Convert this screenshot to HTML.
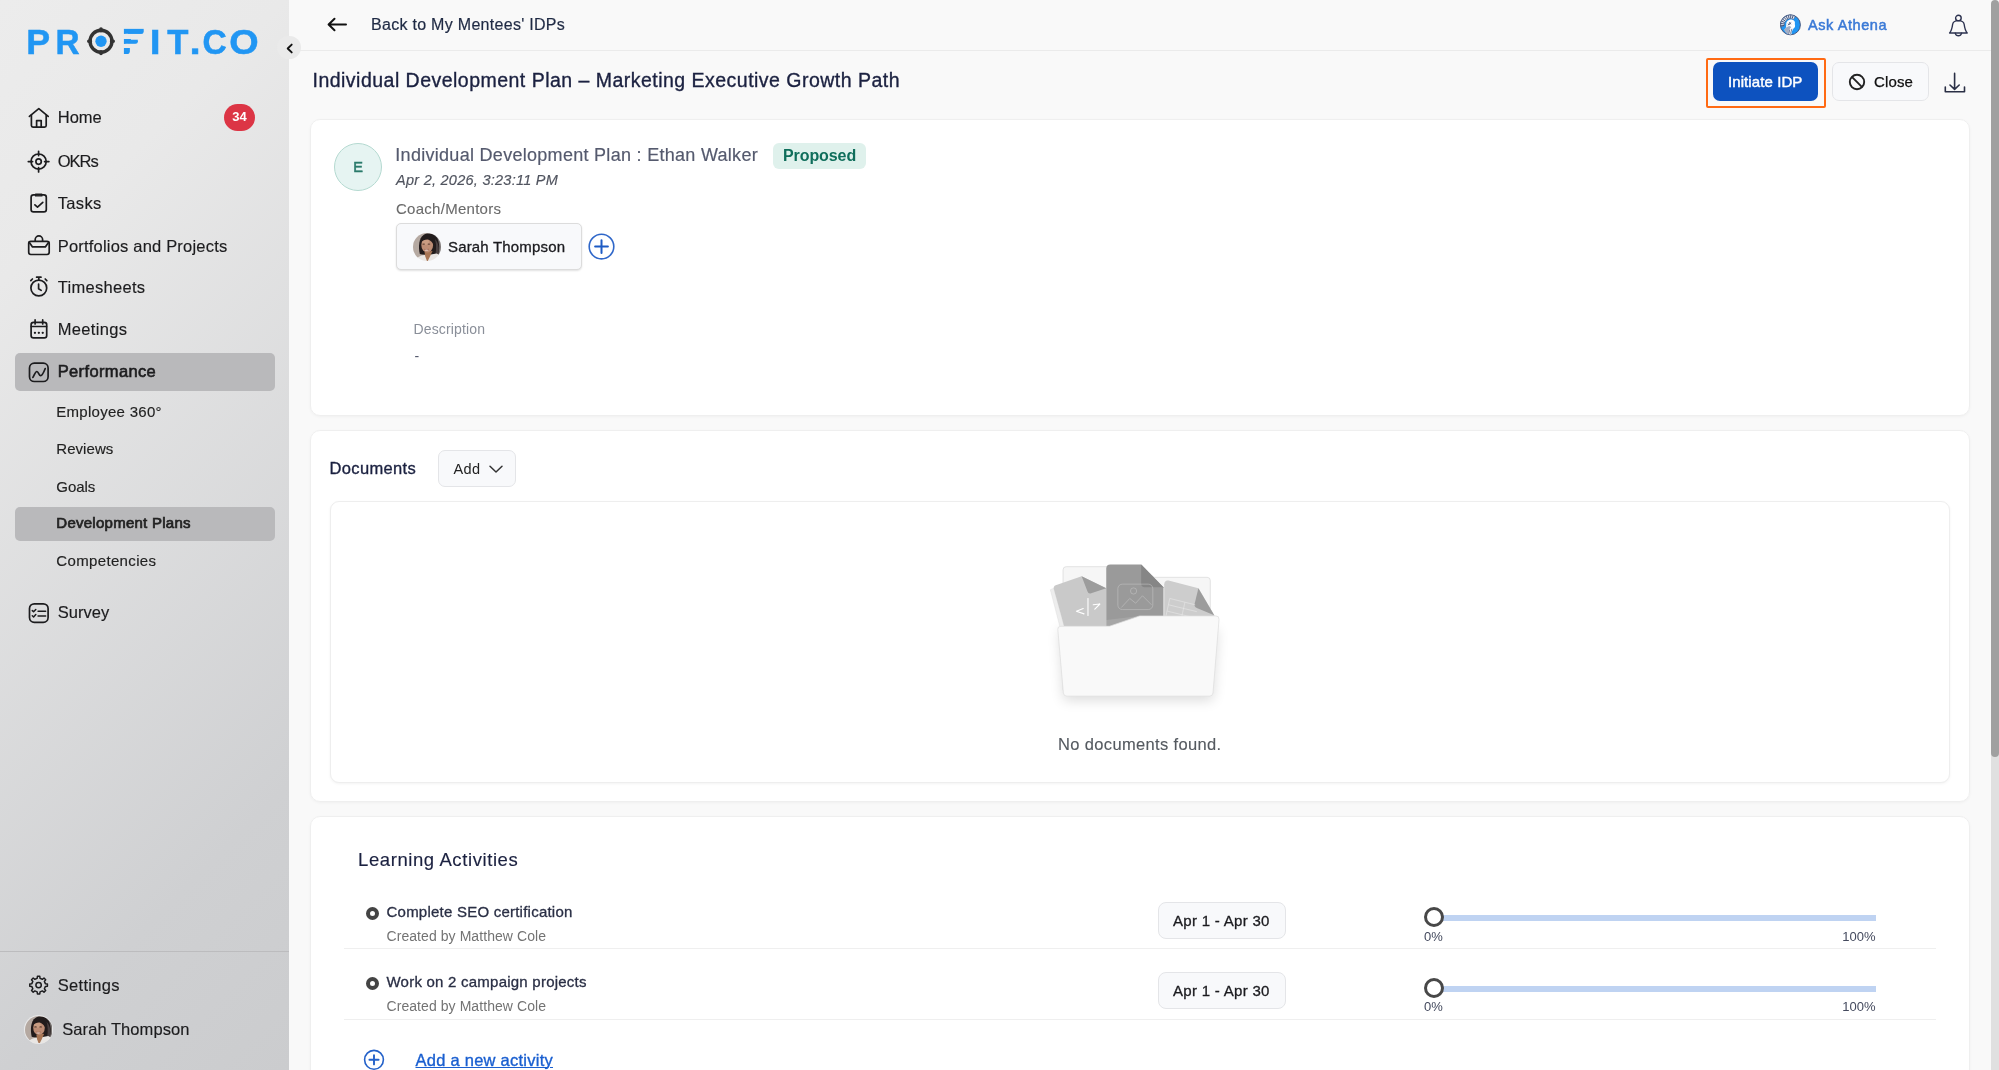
<!DOCTYPE html>
<html lang="en">
<head>
<meta charset="utf-8">
<title>Individual Development Plan</title>
<style>
*{box-sizing:border-box;margin:0;padding:0}
html,body{width:1999px;height:1070px;overflow:hidden;background:#f9f9f9;font-family:"Liberation Sans",Arial,sans-serif;color:#1b1b1f}
.abs{position:absolute}
.t{position:absolute;white-space:nowrap;line-height:1}
#sidebar{position:absolute;left:0;top:0;width:289px;height:1070px;background:linear-gradient(135deg,#ececec 0%,#e9e9e9 21%,#cfd0d2 79%,#cbccce 100%)}
.nav{-webkit-text-stroke:.15px;position:absolute;left:57.7px;font-size:16.5px;color:#1c1c1e;white-space:nowrap;line-height:1;letter-spacing:.1px}
.sub{-webkit-text-stroke:.15px;position:absolute;left:56.3px;font-size:15px;color:#222;white-space:nowrap;line-height:1;letter-spacing:.2px}
.ico{position:absolute;left:27px;width:24px;height:24px}
.ico svg{width:24px;height:24px;display:block}
.hl{position:absolute;left:14.5px;width:260px;background:#b9b9bb;border-radius:5px}
#main{position:absolute;left:289px;top:0;width:1702px;height:1070px;background:#f9f9f9}
.card{position:absolute;background:#fff;border:1px solid #efefef;border-radius:10px;box-shadow:0 1px 3px rgba(0,0,0,.04)}

.bul{width:13px;height:13px;border-radius:50%;border:4px solid #444;background:#fff}
.act{font-size:14.5px;color:#2a2f45}
.cre{font-size:13.5px;color:#737373}
.pill{width:127.500px;height:37px;border-radius:8px;background:#f8f9fb;border:1px solid #e4e5e8}
.pilltx{font-size:15px;color:#1b1b1f}
.track{width:436px;height:6px;background:#bfd3f2}
.knob{width:20px;height:20px;border-radius:50%;background:#fff;border:3px solid #484848}
.pct{font-size:13px;color:#444a5e}
.sep{left:344px;width:1592px;height:1px;background:#efefef}
</style>
</head>
<body>
<svg width="0" height="0" style="position:absolute"><defs>
<clipPath id="avc"><circle cx="14" cy="14" r="14"/></clipPath>
<filter id="avb" x="0" y="0" width="100%" height="100%"><feGaussianBlur stdDeviation="0.75"/></filter>
<symbol id="avatar" viewBox="0 0 28 28"><g clip-path="url(#avc)"><g filter="url(#avb)">
<rect x="-6" y="-6" width="40" height="40" fill="#b5a9a1"/>
<rect x="20" y="-6" width="14" height="40" fill="#7a7573"/>
<path d="M6.800 21C5.200 14 5.800 5 10.500 2C15 -0.800 22.500 0.500 25 7C26.800 12.500 26.500 18.500 24.800 21.500L17 22L9 21.500Z" fill="#231b1b"/>
<path d="M22 6C25 9 26.500 14 25.500 21L22.500 21C23.500 15 23 10 22 6Z" fill="#4a4040"/>
<path d="M2 32C2.500 25.500 5.500 23 10 22.200L18 21.400L23.500 20.400C27 21.500 29 25 29.500 32Z" fill="#e9e6e3"/>
<path d="M11.500 19L12.300 23.500L14.300 29L17 23.500L19.500 18Z" fill="#a87655"/>
<ellipse cx="14.200" cy="12" rx="5.900" ry="7.400" fill="#bd8d74"/>
<ellipse cx="12.500" cy="9" rx="3.500" ry="3" fill="#c99c82"/>
<path d="M8 9.500C8.500 5.500 11.500 3.600 14.500 4C18.500 4.400 20.800 7.500 20.800 12C19.500 10 18 7.500 15 6.600C12.500 6.200 9.800 7.500 8 9.500Z" fill="#231b1b"/>
<ellipse cx="10.700" cy="11.100" rx="1.400" ry=".6" fill="#5d3f33"/><ellipse cx="15.900" cy="11.100" rx="1.400" ry=".6" fill="#5d3f33"/>
<ellipse cx="13.400" cy="17.100" rx="1.900" ry=".75" fill="#ecd9d2"/>
<path d="M11 16.300Q13.400 17 16 16.200" stroke="#8a5242" stroke-width=".5" fill="none"/>
</g></g></symbol></defs></svg>
<div id="sidebar" style="will-change:transform">
  <!-- logo -->
  <svg class="abs" style="left:20px;top:15px" width="250" height="55" viewBox="0 0 250 55" aria-label="PROFIT.CO">
<defs><clipPath id="fclip"><path d="M103.900 13.400H123.700V16.700Q123.700 18.800 121.200 18.800H103.900Z"/><path d="M103.900 23.900H117.800V26.600Q117.800 28.800 115.300 28.800H103.900Z"/><path d="M103.900 33.100H109.800V36.500Q109.800 38.900 107.300 38.900H103.900Z"/></clipPath></defs>
<g font-family="Liberation Sans, Arial, sans-serif" font-weight="700" font-size="34.5" fill="#2196f3" stroke="#2196f3" stroke-width="0.5">
<text transform="translate(6.36 38.5) scale(1.038 1.031)">P</text>
<text transform="translate(35.53 38.5) scale(0.966 1.031)">R</text>
<text transform="translate(129.76 38.5) scale(1.13 1.031)">I</text>
<text transform="translate(147.2 38.5) scale(1.005 1.031)">T</text>
<text transform="translate(169.62 38.5) scale(1.17 1.031)">.</text>
<text transform="translate(182.49 38.5) scale(0.971 1.031)">C</text>
<text transform="translate(209.18 38.5) scale(1.096 1.031)">O</text>
<g clip-path="url(#fclip)"><text transform="translate(101.55 38.5) scale(1.091 1.031)" stroke-width="2.6">F</text></g>
</g>
<circle cx="81" cy="26.25" r="10.950" fill="none" stroke="#333" stroke-width="3.400"/>
<path d="M81 14.050V15.650M81 36.850V38.450M68.800 26.250H70.400M91.600 26.250H93.200" stroke="#333" stroke-width="3.600" stroke-linecap="round"/>
<circle cx="81" cy="26.25" r="5.650" fill="#2196f3"/>
</svg>

  <div class="ico" style="top:106px" id="i-home"><svg viewBox="0 0 24 24"><g fill="none" stroke="#1c1c1e" stroke-width="1.7" stroke-linecap="round" stroke-linejoin="round"><path d="M2.4 10.4L11.8 2.7L21.2 10.4"/><path d="M4.4 9.2V19.6a1.6 1.6 0 0 0 1.6 1.6H17.6a1.6 1.6 0 0 0 1.6-1.6V9.2"/><path d="M9.6 21V14.6H14.2V21"/></g></svg></div>
  <div class="nav" id="n-home" style="top:109px;letter-spacing:0.03px">Home</div>
  <div class="abs" style="left:223.7px;top:104.3px;width:31.6px;height:26.5px;border-radius:14px;background:#dc3545;color:#fff;font-size:13px;font-weight:700;text-align:center;line-height:26.5px">34</div>

  <div class="ico" style="top:149px" id="i-okr"><svg viewBox="0 0 24 24"><g fill="none" stroke="#1c1c1e" stroke-width="1.7" stroke-linecap="round" stroke-linejoin="round"><circle cx="11.6" cy="12.6" r="7.6"/><circle cx="11.6" cy="12.6" r="2.7"/><path d="M11.6 2.3V6.6M11.6 18.6V22.9M1.3 12.6H5.6M17.6 12.6H21.9"/></g></svg></div>
  <div class="nav" id="n-okr" style="top:153px;letter-spacing:-0.97px">OKRs</div>

  <div class="ico" style="top:191px" id="i-tasks"><svg viewBox="0 0 24 24"><g fill="none" stroke="#1c1c1e" stroke-width="1.7" stroke-linecap="round" stroke-linejoin="round"><rect x="4.1" y="3.9" width="15.2" height="16.9" rx="2.4"/><path d="M8.6 3.3H14.8V4.9H8.6Z" stroke-width="1.4"/><path d="M7.9 13.9L10.5 16.1L15.8 11.4"/></g></svg></div>
  <div class="nav" id="n-tasks" style="top:195px;letter-spacing:0.36px">Tasks</div>

  <div class="ico" style="top:233px" id="i-port"><svg viewBox="0 0 24 24"><g fill="none" stroke="#1c1c1e" stroke-width="1.7" stroke-linecap="round" stroke-linejoin="round"><rect x="1.7" y="8.3" width="20.5" height="13.2" rx="2.2"/><path d="M8.2 8.1V6.6a3.7 3.7 0 0 1 7.4 0V8.1"/><path d="M2.2 9.2L5.5 13.9H18.3L21.7 9.2"/></g></svg></div>
  <div class="nav" id="n-port" style="top:237.7px;letter-spacing:0.20px">Portfolios and Projects</div>

  <div class="ico" style="top:275px" id="i-time"><svg viewBox="0 0 24 24"><g fill="none" stroke="#1c1c1e" stroke-width="1.7" stroke-linecap="round" stroke-linejoin="round"><circle cx="11.8" cy="13" r="7.9"/><path d="M9.6 2.2H14M11.8 2.4V4.6M3.8 5.6L5.4 4M19.8 5.6L18.2 4"/><path d="M11.6 9.2V13.7L14.2 15.4"/></g></svg></div>
  <div class="nav" id="n-time" style="top:279px;letter-spacing:0.30px">Timesheets</div>

  <div class="ico" style="top:317px" id="i-meet"><svg viewBox="0 0 24 24"><g fill="none" stroke="#1c1c1e" stroke-width="1.7" stroke-linecap="round" stroke-linejoin="round"><rect x="4.1" y="5.4" width="15.6" height="15.5" rx="2.4"/><path d="M4.3 9.5H19.5M8.1 2.9V7M15.7 2.9V7"/><path d="M7.9 15.8H8M11.8 15.8H11.9M15.7 15.8H15.8" stroke-width="2.2"/></g></svg></div>
  <div class="nav" id="n-meet" style="top:321px;letter-spacing:0.34px">Meetings</div>

  <div class="hl" style="top:353.2px;height:37.8px"></div>
  <div class="ico" style="top:360px" id="i-perf"><svg viewBox="0 0 24 24"><g fill="none" stroke="#1c1c1e" stroke-width="1.7" stroke-linecap="round" stroke-linejoin="round"><rect x="2.5" y="3.1" width="18.6" height="18.4" rx="4.8"/><path d="M5.9 17.4C7.6 14.4 8.4 11.4 9.9 11.5C11.6 11.6 11.9 15.7 13.7 15.6C15.6 15.5 17 11.6 18.2 8.6"/></g></svg></div>
  <div class="nav" id="n-perf" style="top:363px;font-weight:400;-webkit-text-stroke:.6px;letter-spacing:0.36px">Performance</div>

  <div class="sub" id="n-emp" style="top:403.5px;letter-spacing:0.28px">Employee 360°</div>
  <div class="sub" id="n-rev" style="top:440.5px;letter-spacing:0.05px">Reviews</div>
  <div class="sub" id="n-goals" style="top:478.5px;letter-spacing:-0.07px">Goals</div>
  <div class="hl" style="top:506.8px;height:34px"></div>
  <div class="sub" id="n-dev" style="top:515px;font-weight:400;-webkit-text-stroke:.7px;letter-spacing:0.26px">Development Plans</div>
  <div class="sub" id="n-comp" style="top:552.5px;letter-spacing:0.35px">Competencies</div>

  <div class="ico" style="top:601px" id="i-survey"><svg viewBox="0 0 24 24"><g fill="none" stroke="#1c1c1e" stroke-width="1.7" stroke-linecap="round" stroke-linejoin="round"><rect x="2.5" y="2.8" width="18.6" height="18.6" rx="4.8"/><path d="M5.3 9.6L6.6 10.8L8.8 8.5M5.3 14.8L6.6 16L8.8 13.6" stroke-width="1.5"/><path d="M11.1 10.3H18.6M11.1 15H18.6" stroke-width="1.6"/></g></svg></div>
  <div class="nav" id="n-survey" style="top:604px;letter-spacing:0.05px">Survey</div>

  <div class="abs" style="left:0;top:950.6px;width:289px;height:1px;background:#bcbcbe"></div>
  <div class="ico" style="top:973px" id="i-set"><svg viewBox="0 0 24 24"><g fill="none" stroke="#1c1c1e" stroke-width="1.5" stroke-linejoin="round"><path d="M10.15 5.35 L10.42 3.28 L12.78 3.28 L13.05 5.35 L15.34 6.30 L17.00 5.02 L18.68 6.70 L17.40 8.36 L18.35 10.65 L20.42 10.92 L20.42 13.28 L18.35 13.55 L17.40 15.84 L18.68 17.50 L17.00 19.18 L15.34 17.90 L13.05 18.85 L12.78 20.92 L10.42 20.92 L10.15 18.85 L7.86 17.90 L6.20 19.18 L4.52 17.50 L5.80 15.84 L4.85 13.55 L2.78 13.28 L2.78 10.92 L4.85 10.65 L5.80 8.36 L4.52 6.70 L6.20 5.02 L7.86 6.30Z"/><circle cx="11.6" cy="12.1" r="2.7"/></g></svg></div>
  <div class="nav" id="n-set" style="top:977px;letter-spacing:0.33px">Settings</div>
  <div class="abs" id="av-side" style="left:24px;top:1015px;width:29px;height:29px;border-radius:50%;background:#e9e9ea"><svg style="position:absolute;left:.7px;top:.7px" width="27.6" height="27.6"><use href="#avatar"/></svg></div>
  <div class="nav" id="n-sarah" style="left:62.3px;top:1021px;letter-spacing:0.06px">Sarah Thompson</div>
</div>

<div id="main"></div>
<div id="content" style="will-change:transform;position:absolute;left:0;top:0;width:1999px;height:1070px">
  <!-- topbar -->
  <div class="abs" style="left:289px;top:50px;width:1702px;height:1px;background:#ebebeb"></div>
  <svg class="abs" style="left:326px;top:16px" width="22" height="17" viewBox="0 0 22 17"><path d="M20 8.5H3M8.5 2.8L2.6 8.5L8.5 14.2" fill="none" stroke="#111" stroke-width="2" stroke-linecap="round" stroke-linejoin="round"/></svg>
  <div class="t" id="back" style="left:371px;top:17px;font-size:16px;color:#1f2a44;-webkit-text-stroke:0.2px;letter-spacing:0.29px">Back to My Mentees' IDPs</div>

  <div class="abs" id="athena" style="left:1780px;top:14px;width:22px;height:22px"><svg width="22" height="22" viewBox="0 0 22 22"><circle cx="10.400" cy="10.800" r="10" fill="#2196f3" stroke="#3a4a72" stroke-width=".9"/>
<path d="M0.950 12.470A9.600 9.600 0 0 1 15.200 2.490L13.500 5.430A6.200 6.200 0 0 0 4.300 11.880Z" fill="#e4e9f2" stroke="#3a4a72" stroke-width=".5"/>
<path d="M4.04 11.47L0.85 11.80M4.06 9.91L0.89 9.46M4.47 8.40L1.50 7.20M5.22 7.04L2.63 5.16M6.29 5.90L4.23 3.45M7.59 5.05L6.19 2.17M9.07 4.54L8.40 1.41M10.62 4.40L10.74 1.21M12.16 4.65L13.05 1.57" stroke="#3a4a72" stroke-width=".9"/>
<path d="M6.200 10.500C6.200 6.800 9.500 5 12.500 5.700C14.800 6.300 15.300 8.500 14.800 10C15.500 12 15 14 13.500 14.500C12.500 16 11.500 17.500 11.500 20.300C8.500 20.800 5.500 18.800 4.400 15.800C6 14.500 6.300 12.500 6.200 10.500Z" fill="#fff"/>
<path d="M4.200 15.500C5.500 13.700 7.500 12.400 9.500 12L11.300 13L9 16L8.500 20.300C6.200 19.500 4.700 17.700 4.200 15.500Z" fill="#a4aec4"/>
<path d="M7.800 11.200L11.200 8.500M9.300 8.200L10.800 10.300M8.300 9.600L9.600 11" stroke="#3a4a72" stroke-width=".8"/>
<path d="M11.900 14.800L10.500 19.800M9.800 15.500L8.800 19.800" stroke="#3a4a72" stroke-width=".7"/>
</svg></div>
  <div class="t" id="ask" style="left:1808px;top:18px;font-size:14.5px;font-weight:400;color:#3a79d6;-webkit-text-stroke:0.5px #3a79d6;letter-spacing:0.58px">Ask Athena</div>
  <div class="abs" id="bell" style="left:1947px;top:14px;width:24px;height:25px"><svg width="24" height="25" viewBox="0 0 24 25"><g fill="none" stroke="#2d3350" stroke-width="1.4" stroke-linejoin="round" stroke-linecap="round">
<circle cx="11.400" cy="4.100" r="2.800"/>
<path d="M2.600 19C4.800 16.500 5.200 13.500 5.600 10.500C6 7.600 8.500 6.600 11.400 6.600C14.300 6.600 16.800 7.600 17.200 10.500C17.600 13.500 18 16.500 20.200 19Z"/>
<path d="M8.300 19.300A3.200 3.200 0 0 0 14.500 19.300"/></g></svg></div>

  <div class="t" id="title" style="left:312.5px;top:71px;font-size:19.5px;color:#1b2140;-webkit-text-stroke:0.35px;letter-spacing:0.48px">Individual Development Plan – Marketing Executive Growth Path</div>

  <div class="abs" style="left:1705.8px;top:58px;width:120.5px;height:50px;border:2px solid #ff6a13;border-radius:2px"></div>
  <div class="abs" style="left:1713px;top:62px;width:105px;height:39px;border-radius:7px;background:#0d52bf"></div>
  <div class="t" id="init" style="left:1728px;top:74px;font-size:15px;font-weight:400;color:#fff;-webkit-text-stroke:0.45px #fff;letter-spacing:0.09px">Initiate IDP</div>
  <div class="abs" style="left:1832px;top:62px;width:97px;height:39px;border-radius:7px;background:#f8f9fb;border:1px solid #e4e5e8"></div>
  <svg class="abs" style="left:1848px;top:73px" width="18" height="18" viewBox="0 0 18 18"><circle cx="9" cy="9" r="7.2" fill="none" stroke="#222" stroke-width="1.9"/><path d="M3.9 3.9L14.1 14.1" stroke="#222" stroke-width="1.9"/></svg>
  <div class="t" id="close" style="left:1874px;top:74px;font-size:15px;color:#111;-webkit-text-stroke:.25px;letter-spacing:0.13px">Close</div>
  <svg class="abs" style="left:1943px;top:72px" width="23" height="22" viewBox="0 0 23 22"><path d="M11.600 1.400V17.200M7 13L11.600 17.400L16.200 13M2.300 15V19.800H21.500V15" fill="none" stroke="#2a2f45" stroke-width="1.6" stroke-linecap="round" stroke-linejoin="round"/></svg>

  <!-- card 1 -->
  <div class="card" style="left:310px;top:119px;width:1660px;height:297px"></div>
  <div class="abs" style="left:334px;top:143px;width:48px;height:48px;border-radius:50%;background:#e6f4f2;border:1px solid #b4d9d0"></div>
  <div class="t" style="left:334px;top:159.5px;width:48px;text-align:center;font-size:14.5px;font-weight:400;-webkit-text-stroke:.5px;color:#2a7a6b">E</div>
  <div class="t" id="idpt" style="left:395.3px;top:146px;font-size:18px;color:#555a6e;-webkit-text-stroke:.18px;letter-spacing:0.29px">Individual Development Plan : Ethan Walker</div>
  <div class="abs" style="left:772.5px;top:143px;width:93.5px;height:26px;border-radius:6px;background:#dff1ec"></div>
  <div class="t" id="prop" style="left:783px;top:147.5px;font-size:16px;font-weight:700;color:#0f6e5b;letter-spacing:-0.09px">Proposed</div>
  <div class="t" id="date" style="left:396px;top:172.5px;font-size:14.5px;font-style:italic;color:#50545f;-webkit-text-stroke:.15px;letter-spacing:0.26px">Apr 2, 2026, 3:23:11 PM</div>
  <div class="t" id="coach" style="left:396px;top:201px;font-size:15px;color:#6b6b6b;-webkit-text-stroke:.1px;letter-spacing:0.27px">Coach/Mentors</div>
  <div class="abs" style="left:396px;top:223px;width:186px;height:47px;border-radius:5px;background:#f8f9fb;border:1px solid #dcdcdc;box-shadow:0 1px 2px rgba(0,0,0,.12)"></div>
  <div class="abs" id="av-chip" style="left:412.5px;top:232.5px;width:28px;height:28px;border-radius:50%"><svg width="28" height="28" style="display:block"><use href="#avatar"/></svg></div>
  <div class="t" id="chipname" style="left:448px;top:239px;font-size:15px;color:#1b1b1f;-webkit-text-stroke:0.3px;letter-spacing:0.17px">Sarah Thompson</div>
  <svg class="abs" style="left:588px;top:233px" width="28" height="28" viewBox="0 0 28 28"><circle cx="13.5" cy="13.6" r="12.3" fill="#fff" stroke="#2f67c9" stroke-width="1.6"/><path d="M13.5 7.2V20M7.1 13.6H19.9" stroke="#1d5bc4" stroke-width="2" stroke-linecap="round"/></svg>
  <div class="t" id="desc" style="left:413.5px;top:321.5px;font-size:14px;color:#8a8f99;letter-spacing:0.15px">Description</div>
  <div class="t" style="left:414.5px;top:349px;font-size:14px;color:#555a6e">-</div>

  <!-- card 2 -->
  <div class="card" style="left:310px;top:430px;width:1660px;height:372px"></div>
  <div class="t" id="docs" style="left:329.5px;top:459.5px;font-size:16.5px;color:#1b2140;-webkit-text-stroke:0.35px;letter-spacing:0.35px">Documents</div>
  <div class="abs" style="left:438px;top:450px;width:78px;height:37px;border-radius:7px;background:#f8f9fb;border:1px solid #e4e5e8"></div>
  <div class="t" id="add" style="left:453.5px;top:462px;font-size:14.5px;color:#222;letter-spacing:0.40px">Add</div>
  <svg class="abs" style="left:488px;top:464px" width="16" height="10" viewBox="0 0 16 10"><path d="M2 2.3L8 8L14 2.3" fill="none" stroke="#333" stroke-width="1.5" stroke-linecap="round" stroke-linejoin="round"/></svg>
  <div class="abs" style="left:330px;top:501px;width:1620px;height:282px;border-radius:9px;background:#fff;border:1px solid #eeeeee;box-shadow:0 1px 3px rgba(0,0,0,.05)"></div>
  <div class="abs" id="folder" style="left:1030px;top:550px;width:220px;height:170px"><svg width="220" height="170" viewBox="0 0 220 170">
<defs><filter id="fsh" x="-30%" y="-30%" width="160%" height="170%"><feGaussianBlur stdDeviation="6.5"/></filter></defs>
<path d="M29.39 74.66H187.45L182.68 145.35H33.68Z" fill="#000" opacity=".14" filter="url(#fsh)" transform="translate(0 5)"/>
<path d="M33.04 19.86Q33.04 16.68 36.22 16.68H111.2L123.91 27.32H177.12Q180.3 27.32 180.3 30.5V139.79H33.04Z" fill="#f6f6f6" stroke="#d8d8d8" stroke-width="0.7"/>
<!-- left doc stack edges -->
<path d="M20.33 39.71L23.83 38.13L34.15 76.25L30.18 77.84Z" fill="#ededed" stroke="#d8d8d8" stroke-width=".4"/>
<!-- left doc -->
<path d="M23.83 38.92Q23.19 36.22 25.73 35.27L51.63 26.21L76.25 38.13L76.25 76.25L34.15 76.25Z" fill="#c9c9c9"/>
<path d="M51.63 26.21L76.25 38.13L61.16 43.21Q58.46 44.16 57.51 41.62Z" fill="#9c9c9c"/>
<g stroke="#fff" stroke-width="1.1" fill="none" stroke-linecap="round" stroke-linejoin="round"><path d="M53.22 58.46L46.39 61.16L54.01 63.86"/><path d="M57.98 48.45V65.45"/><path d="M63.22 54.81L69.9 54.01L64.81 59.09"/></g>
<!-- right doc -->
<path d="M134.23 34.15Q134.71 29.86 138.52 30.5L168.39 38.13L184.27 65.13L184.27 69.9L134.23 69.9Z" fill="#cdcdcd"/>
<path d="M168.39 38.13L184.27 65.13L166.8 57.98Q163.94 56.71 164.58 54.01Z" fill="#9c9c9c"/>
<g stroke="#ededed" stroke-width=".5" fill="none"><path d="M139.79 48.45L165.21 54.81M138.52 54.81L166.8 61.64M137.41 61.16L158.86 66.4M139.79 48.45L135.82 66.72M154.88 52.42L151.71 66.72"/></g>
<!-- middle doc -->
<path d="M76.25 18.75Q76.25 14.61 80.38 14.61H111.2L133.44 37.33V76.25H76.25Z" fill="#9a9a9a"/>
<path d="M111.2 14.61L133.44 37.33H114.69Q111.2 37.33 111.2 33.84Z" fill="#868686"/>
<g stroke="#c4c4c4" stroke-width=".55" fill="none" stroke-linejoin="round"><rect x="87.85" y="34.15" width="34.95" height="25.42" rx="4.5"/><circle cx="103.57" cy="40.98" r="3.1"/><path d="M91.34 57.51L99.76 48.45L105.64 53.22L112.47 45.75L121.53 54.81"/></g>
<!-- translucent lower overlay on mid doc -->
<path d="M76.25 69.9L109.61 65.93L133.44 65.93V76.25H76.25Z" fill="#fff" opacity=".12"/>
<!-- front panel -->
<path d="M27.8 79.43Q27.48 76.25 30.98 76.25H79.43L109.61 65.93H185.86Q189.36 65.93 189.04 69.42L183.0 142.97Q182.68 146.15 179.51 146.15H36.85Q33.68 146.15 33.36 142.97Z" fill="#f9f9f9" stroke="#dcdcdc" stroke-width=".7"/>
</svg></div>
  <div class="t" id="nodoc" style="left:1058px;top:736px;font-size:16.5px;color:#555a60;-webkit-text-stroke:.12px;letter-spacing:0.35px">No documents found.</div>

  <!-- card 3 -->
  <div class="card" style="left:310px;top:816px;width:1660px;height:300px"></div>
  <div class="t" id="la" style="left:358px;top:851px;font-size:18.5px;color:#1b2140;-webkit-text-stroke:.15px;letter-spacing:0.59px">Learning Activities</div>

  <div class="abs bul" style="left:366px;top:907px"></div>
  <div class="t act" id="a1" style="left:386.5px;top:903.7px;-webkit-text-stroke:0.3px;font-size:15px;letter-spacing:0.23px">Complete SEO certification</div>
  <div class="t cre" id="c1" style="left:386.5px;top:928.5px;font-size:14px;letter-spacing:0.07px">Created by Matthew Cole</div>
  <div class="abs pill" style="left:1158px;top:902px"></div>
  <div class="t pilltx" id="p1" style="left:1173px;top:913px;-webkit-text-stroke:0.3px;letter-spacing:0.30px">Apr 1 - Apr 30</div>
  <div class="abs track" style="left:1440px;top:915px"></div>
  <div class="abs knob" style="left:1424px;top:907px"></div>
  <div class="t pct" style="left:1424px;top:929.5px">0%</div>
  <div class="t pct" style="left:1775px;width:100.5px;text-align:right;top:929.5px">100%</div>
  <div class="abs sep" style="top:948px"></div>

  <div class="abs bul" style="left:366px;top:977px"></div>
  <div class="t act" id="a2" style="left:386.5px;top:973.8px;-webkit-text-stroke:0.3px;font-size:15px;letter-spacing:0.23px">Work on 2 campaign projects</div>
  <div class="t cre" id="c2" style="left:386.5px;top:998.5px;font-size:14px;letter-spacing:0.07px">Created by Matthew Cole</div>
  <div class="abs pill" style="left:1158px;top:972px"></div>
  <div class="t pilltx" id="p2" style="left:1173px;top:983px;-webkit-text-stroke:0.3px;letter-spacing:0.30px">Apr 1 - Apr 30</div>
  <div class="abs track" style="left:1440px;top:985.5px"></div>
  <div class="abs knob" style="left:1424px;top:978px"></div>
  <div class="t pct" style="left:1424px;top:1000px">0%</div>
  <div class="t pct" style="left:1775px;width:100.5px;text-align:right;top:1000px">100%</div>
  <div class="abs sep" style="top:1019px"></div>

  <svg class="abs" style="left:363px;top:1049px" width="22" height="22" viewBox="0 0 22 22"><circle cx="11" cy="10.8" r="9.4" fill="none" stroke="#2361c9" stroke-width="1.6"/><path d="M11 6.2V15.4M6.4 10.8H15.6" stroke="#2361c9" stroke-width="1.9" stroke-linecap="round"/></svg>
  <div class="t" id="addact" style="left:415.5px;top:1051.5px;font-size:16.5px;color:#1a5fd0;text-decoration:underline;text-underline-offset:1.2px;text-decoration-thickness:1.2px;-webkit-text-stroke:0.35px;letter-spacing:0.25px">Add a new activity</div>
</div>

<!-- collapse btn -->
<div class="abs" style="left:277px;top:35.6px;width:23.6px;height:23.6px;border-radius:50%;background:#eaeaea"></div>
<svg class="abs" style="left:283px;top:41px" width="14" height="14" viewBox="0 0 14 14"><path d="M8.700 3.600L4.700 7.500L8.700 11.400" fill="none" stroke="#111" stroke-width="1.9" stroke-linecap="round" stroke-linejoin="round"/></svg>

<!-- scrollbar -->
<div class="abs" style="left:1991px;top:4px;width:8px;height:1066px;background:#e0e0e0"></div>
<div class="abs" style="left:1991px;top:0;width:8px;height:757px;background:#a0a0a0;border-radius:4px"></div>
</body>
</html>
